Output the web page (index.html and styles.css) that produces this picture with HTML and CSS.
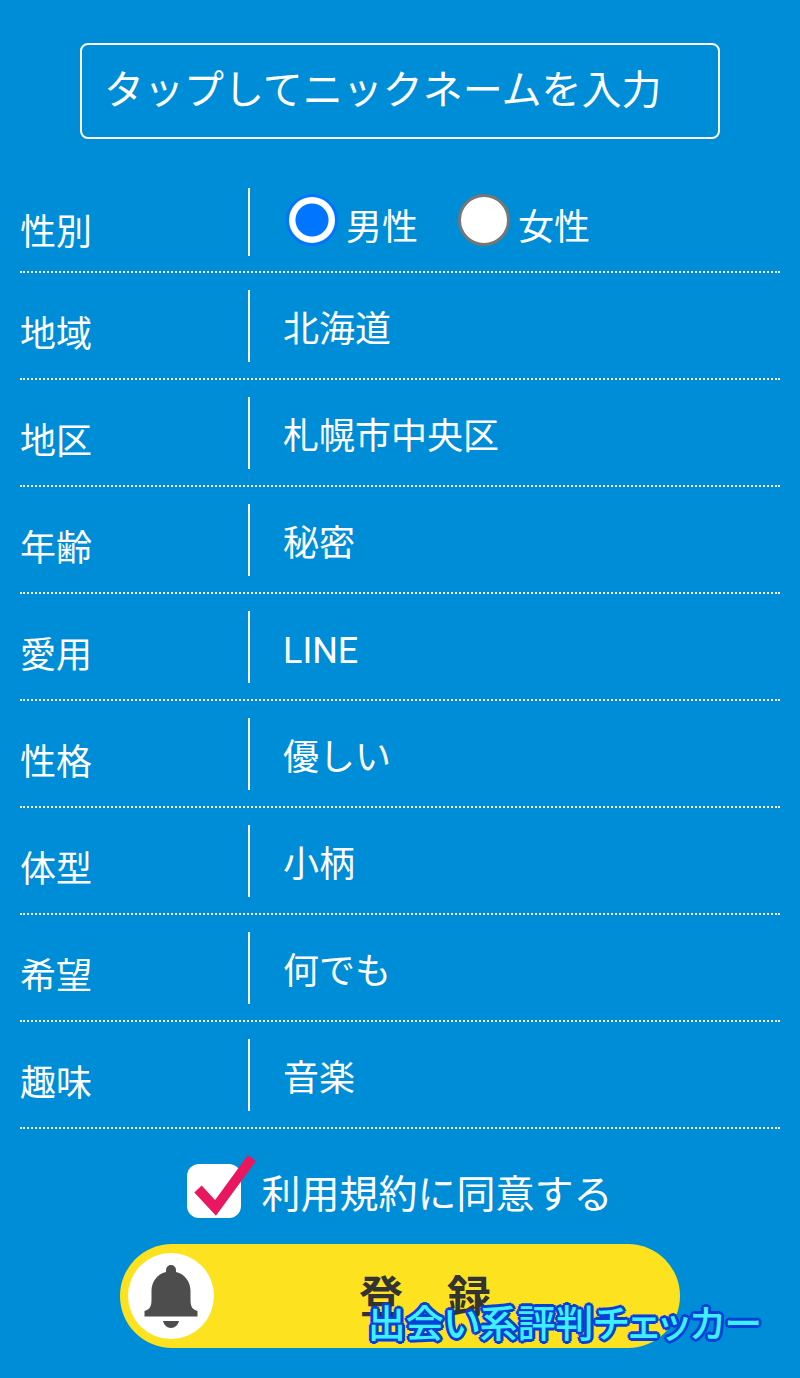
FILE: index.html
```html
<!DOCTYPE html>
<html lang="ja">
<head>
    <meta charset="UTF-8">
    <meta name="viewport" content="width=device-width, initial-scale=1.0">
    <title>プロフィール登録</title>
    <link rel="stylesheet" href="styles.css">
</head>
<body>
    <form class="profile-form">
        <input class="nickname" type="text" name="nickname" aria-label="ニックネーム" placeholder="タップしてニックネームを入力">

        <div class="fields">
            <div class="row row-gender" role="radiogroup" aria-labelledby="gender-label">
                <span class="row-label" id="gender-label">性別</span>
                <div class="row-value">
                    <label class="radio"><input type="radio" name="gender" value="male" checked>男性</label>
                    <label class="radio"><input type="radio" name="gender" value="female">女性</label>
                </div>
            </div>
            <div class="row">
                <label class="row-label" for="area">地域</label>
                <select class="row-value" id="area"><option>北海道</option></select>
            </div>
            <div class="row">
                <label class="row-label" for="city">地区</label>
                <select class="row-value" id="city"><option>札幌市中央区</option></select>
            </div>
            <div class="row">
                <label class="row-label" for="age">年齢</label>
                <select class="row-value" id="age"><option>秘密</option></select>
            </div>
            <div class="row">
                <label class="row-label" for="app">愛用</label>
                <select class="row-value" id="app"><option>LINE</option></select>
            </div>
            <div class="row">
                <label class="row-label" for="character">性格</label>
                <select class="row-value" id="character"><option>優しい</option></select>
            </div>
            <div class="row">
                <label class="row-label" for="figure">体型</label>
                <select class="row-value" id="figure"><option>小柄</option></select>
            </div>
            <div class="row">
                <label class="row-label" for="wish">希望</label>
                <select class="row-value" id="wish"><option>何でも</option></select>
            </div>
            <div class="row">
                <label class="row-label" for="hobby">趣味</label>
                <select class="row-value" id="hobby"><option>音楽</option></select>
            </div>
        </div>

        <label class="agree">
            <span class="agree-box">
                <input type="checkbox" name="agree" checked>
                <svg class="tick" viewBox="0 0 72 64" aria-hidden="true">
                    <path d="M11 35 L28.500 54 L65 4" fill="none" stroke="#e9185e" stroke-width="10"/>
                </svg>
            </span>
            <span class="agree-text">利用規約に同意する</span>
        </label>

        <div class="submit-area">
            <button class="submit" type="submit">
                <span class="bell">
                    <svg viewBox="0 0 86 86" aria-hidden="true">
                        <path fill="#4d4d4d" d="M38 17 a5 5 0 0 1 10 0 v2 C57 21 62.500 29 62.500 38 V46 C62.500 54 64 56 69.500 58 V63.500 H16.500 V58 C22 56 23.500 54 23.500 46 V38 C23.500 29 29 21 38 19 Z"/>
                        <path fill="#4d4d4d" d="M35 68 H51 C50 72 47 75 43 75 C39 75 36 72 35 68 Z"/>
                    </svg>
                </span>
                <span class="submit-text">登　録</span>
            </button>
            <span class="site-name">出会い系評判チェッカー</span>
        </div>
    </form>
</body>
</html>
```
FILE: styles.css
```css
* {
    box-sizing: border-box;
}
body {
    margin: 0;
    background: #008dd7;
    color: white;
    font-family: Roboto, "Noto Sans CJK JP", sans-serif;
    font-size: 36px;
}
input, select, button {
    font: inherit;
    color: inherit;
    margin: 0;
}
.profile-form {
    display: flex;
    flex-direction: column;
    padding: 43px 20px 30px;
}
.nickname {
    height: 96px;
    margin: 0 60px 32px;
    padding: 0 22px 2px;
    border: 2px solid white;
    border-radius: 8px;
    background: transparent;
    font-size: 40px;
}
.nickname::placeholder {
    color: white;
    opacity: 1;
}

/* Profile rows */
.row {
    display: grid;
    grid-template-columns: 230px 1fr;
    grid-template-rows: 72px;
    padding: 17px 0 16px;
    border-bottom: 2px dotted white;
}
.row-gender {
    grid-template-rows: 68px;
    padding-bottom: 15px;
}
.row-label {
    padding-top: 18px;
    border-right: 2px solid white;
    line-height: 54px;
}
.row-value {
    padding: 8px 0 0 33px;
    border: none;
    background: transparent;
}
select.row-value {
    appearance: none;
}
.row-gender .row-value {
    display: flex;
    gap: 40px;
    padding: 4px 0 0 36px;
}
.radio {
    display: flex;
    align-items: center;
    gap: 8px;
}
.radio input {
    appearance: none;
    width: 52px;
    height: 52px;
    margin-bottom: 8px;
    border: 3px solid #767676;
    border-radius: 50%;
    background: white;
}
.radio input:checked {
    border-color: #0075ff;
    background: radial-gradient(circle, #0075ff 16px, white 17px);
}

/* Terms */
.agree {
    display: flex;
    align-items: flex-start;
    align-self: center;
    gap: 20px;
    margin: 35px 0 22px;
    font-size: 39px;
    line-height: 54px;
}
.agree-text {
    padding-top: 4px;
}
.agree-box {
    position: relative;
    height: 54px;
}
.agree-box input {
    appearance: none;
    display: block;
    width: 54px;
    height: 54px;
    border-radius: 12px;
    background: white;
}
.tick {
    position: absolute;
    left: 0;
    bottom: 0;
    width: 72px;
    height: 64px;
    pointer-events: none;
}

/* Register button */
.submit-area {
    position: relative;
    padding: 0 100px;
}
.submit {
    display: flex;
    align-items: center;
    width: 100%;
    height: 104px;
    padding: 0 44px 0 8px;
    border: none;
    border-radius: 52px;
    background: #fce21f;
    color: #333;
    font-size: 44px;
    font-weight: bold;
}
.bell {
    width: 86px;
    height: 86px;
    border-radius: 50%;
    background: white;
}
.bell svg {
    display: block;
}
.submit-text {
    flex: 1;
    padding-bottom: 4px;
}
.site-name {
    position: absolute;
    right: 18px;
    bottom: -4px;
    color: #3df0fb;
    font-size: 38px;
    font-weight: 500;
    font-feature-settings: "palt";
    line-height: 56px;
    white-space: nowrap;
    text-shadow: 3px 0 #0541d8, -3px 0 #0541d8, 0 3px #0541d8, 0 -3px #0541d8,
        2px 2px #0541d8, -2px 2px #0541d8, 2px -2px #0541d8, -2px -2px #0541d8;
    pointer-events: none;
}
```
